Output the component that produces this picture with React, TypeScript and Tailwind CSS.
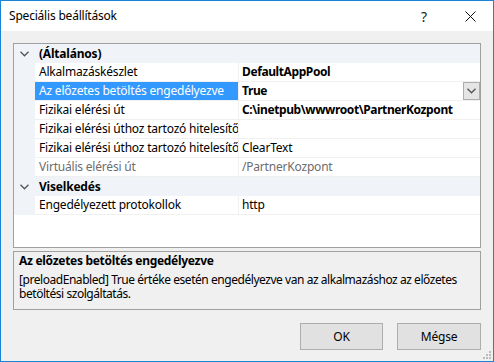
import React from "react"

type Row =
  | { kind: "cat"; label: string }
  | { kind: "prop"; name: string; value: string; bold?: boolean; dim?: boolean; selected?: boolean }

const rows: Row[] = [
  { kind: "cat", label: "(Általános)" },
  { kind: "prop", name: "Alkalmazáskészlet", value: "DefaultAppPool", bold: true },
  { kind: "prop", name: "Az előzetes betöltés engedélyezve", value: "True", bold: true, selected: true },
  { kind: "prop", name: "Fizikai elérési út", value: "C:\\inetpub\\wwwroot\\PartnerKozpont", bold: true },
  { kind: "prop", name: "Fizikai elérési úthoz tartozó hitelesítő adatok", value: "" },
  { kind: "prop", name: "Fizikai elérési úthoz tartozó hitelesítő adatok típusa", value: "ClearText" },
  { kind: "prop", name: "Virtuális elérési út", value: "/PartnerKozpont", dim: true },
  { kind: "cat", label: "Viselkedés" },
  { kind: "prop", name: "Engedélyezett protokollok", value: "http" },
]

function Chevron({ className }: { className?: string }) {
  return (
    <svg width="9" height="6" viewBox="0 0 9 6" className={className}>
      <path d="M0.5 0.8 L4.5 4.8 L8.5 0.8" fill="none" stroke="currentColor" strokeWidth="1.3" />
    </svg>
  )
}

export default function App() {
  return (
    <div className="w-[494px] h-[362px] border border-[#1883d7] bg-[#f0f0f0] flex flex-col text-[12px] text-black font-['Segoe_UI','Noto_Sans',sans-serif] tracking-[-0.2px] overflow-hidden relative">
      {/* Title bar */}
      <div className="h-[30px] bg-white flex items-center pl-[8px] shrink-0">
        <span className="text-[12px] text-[#000]">Speciális beállítások</span>
        <div className="ml-auto flex items-center h-full">
          <span className="w-[46px] text-center text-[14px] text-[#222]">?</span>
          <div className="w-[46px] flex items-center justify-center">
            <svg width="11" height="11" viewBox="0 0 11 11">
              <path d="M0.5 0.5 L10.5 10.5 M10.5 0.5 L0.5 10.5" stroke="#111" strokeWidth="1" />
            </svg>
          </div>
        </div>
      </div>

      <div className="flex-1 flex flex-col px-[12px] pt-[12px]">
        {/* Property grid */}
        <div className="h-[205px] border border-[#a0a0a0] bg-white flex flex-col">
          {rows.map((r, i) =>
            r.kind === "cat" ? (
              <div key={i} className="h-[19px] bg-[#f0f4f9] flex items-center shrink-0">
                <div className="w-[21px] flex justify-center text-[#555]">
                  <Chevron />
                </div>
                <span className="pl-[4px] font-bold">{r.label}</span>
              </div>
            ) : (
              <div key={i} className="h-[19px] flex shrink-0">
                <div className="w-[21px] bg-[#f0f4f9]" />
                <div className="flex-1 flex border-b border-[#f0f0f0]">
                  <div
                    className={`w-[203px] pl-[4px] flex items-center whitespace-nowrap overflow-hidden ${
                      r.selected ? "bg-[#3399ff] text-white" : r.dim ? "text-[#6d6d6d]" : "text-black"
                    }`}
                  >
                    {r.name}
                  </div>
                  <div className="w-px bg-[#f0f0f0]" />
                  <div
                    className={`flex-1 pl-[3px] flex items-center whitespace-nowrap ${
                      r.bold ? "font-bold tracking-[-0.4px]" : ""
                    } ${r.dim ? "text-[#6d6d6d]" : "text-black"}`}
                  >
                    {r.value}
                    {r.selected && (
                      <div className="ml-auto w-[17px] h-[18px] bg-[#e5e5e5] border border-[#adadad] flex items-center justify-center text-[#555]">
                        <Chevron />
                      </div>
                    )}
                  </div>
                </div>
              </div>
            )
          )}
        </div>

        {/* Description */}
        <div className="mt-[3px] h-[59px] border border-[#a0a0a0] bg-[#f0f0f0] pl-[5px] pt-[2px] leading-[14px]">
          <div className="font-bold mb-[5px] tracking-[-0.3px]">Az előzetes betöltés engedélyezve</div>
          <div className="whitespace-nowrap tracking-[-0.45px]">
            [preloadEnabled] True értéke esetén engedélyezve van az alkalmazáshoz az előzetes
            <br />
            betöltési szolgáltatás.
          </div>
        </div>

        {/* Buttons */}
        <div className="mt-[13px] flex justify-end gap-[14px]">
          <button className="w-[83px] h-[27px] bg-[#e1e1e1] border border-[#adadad] text-[12px]">OK</button>
          <button className="w-[84px] h-[27px] bg-[#e1e1e1] border border-[#adadad] text-[12px]">Mégse</button>
        </div>
      </div>

      {/* Resize grip */}
      <svg width="10" height="10" viewBox="0 0 10 10" className="absolute right-[2px] bottom-[2px]">
        <rect x="8" y="2" width="2" height="2" fill="#bcbcbc" />
        <rect x="5" y="5" width="2" height="2" fill="#bcbcbc" />
        <rect x="8" y="5" width="2" height="2" fill="#bcbcbc" />
        <rect x="2" y="8" width="2" height="2" fill="#bcbcbc" />
        <rect x="5" y="8" width="2" height="2" fill="#bcbcbc" />
        <rect x="8" y="8" width="2" height="2" fill="#bcbcbc" />
      </svg>
    </div>
  )
}
